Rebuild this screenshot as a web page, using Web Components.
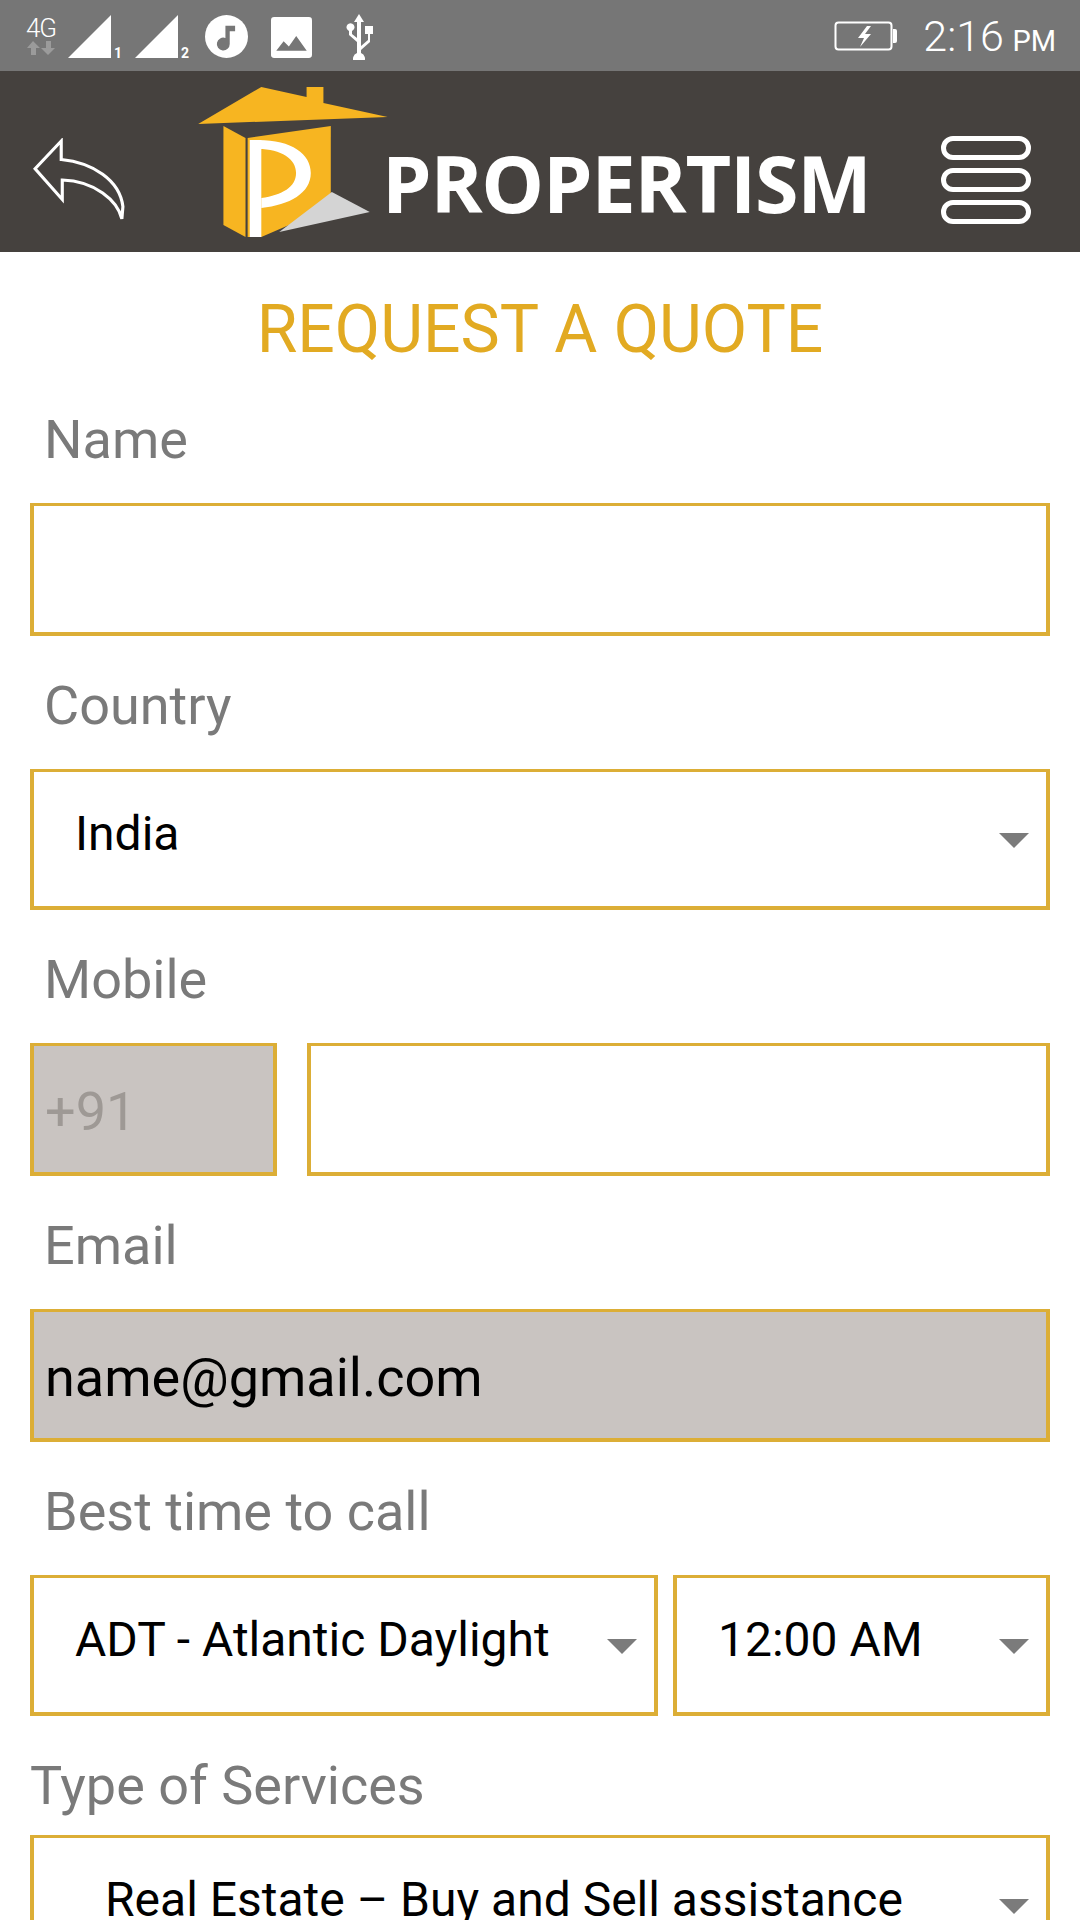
<!DOCTYPE html>
<html>
<head>
<meta charset="utf-8">
<title>Request a quote</title>
<style>
html, body { margin: 0; padding: 0; background: #fff; }
body { width: 1080px; height: 1920px; overflow: hidden; font-family: Roboto, "Liberation Sans", sans-serif; }
</style>
</head>
<body>
<status-bar></status-bar>
<app-header></app-header>
<quote-form>
    <form-field label="Name"><field-box></field-box></form-field>
    <form-field label="Country"><field-box select tall>India</field-box></form-field>
    <form-field label="Mobile">
        <field-row>
            <field-box disabled muted style="width:247px">+91</field-box>
            <field-box style="flex:1"></field-box>
        </field-row>
    </form-field>
    <form-field label="Email"><field-box disabled>name@gmail.com</field-box></form-field>
    <form-field label="Best time to call">
        <field-row narrow>
            <field-box select tall style="width:628px">ADT - Atlantic Daylight</field-box>
            <field-box select tall style="flex:1">12:00 AM</field-box>
        </field-row>
    </form-field>
    <form-field label="Type of Services" flush><field-box select tall wide>Real Estate – Buy and Sell assistance</field-box></form-field>
</quote-form>

<script>
class StatusBar extends HTMLElement {
    constructor() {
        super();
        this.attachShadow({mode: 'open'});
        this.shadowRoot.innerHTML = `
            <style>
            :host { display: flex; align-items: flex-start; height: 71px; background: #767676; color: #fff; font-family: Roboto, sans-serif; }
            .net { display: flex; flex-direction: column; align-items: center; width: 34px; margin: 15px 0 0 24px; }
            .net span { font-size: 26px; line-height: 26px; font-weight: 300; letter-spacing: -1px; }
            svg { display: block; flex: none; }
            .sim1 { margin: 15px 0 0 10px; }
            .sim2 { margin: 15px 0 0 5px; }
            .music { margin: 15px 0 0 8px; }
            .image { margin: 17px 0 0 23px; }
            .usb { margin: 14px 0 0 32px; }
            .battery { margin: 21px 0 0 auto; }
            .time { font-weight: 300; font-size: 43px; line-height: 72px; margin: 0 24px 0 24px; white-space: nowrap; }
            .time small { font-size: 29px; font-weight: 400; margin-left: -2px; }
            </style>
            <div class="net">
                <span>4G</span>
                <svg width="30" height="14" viewBox="0 0 30 14" fill="#9b9b9b">
                    <path d="M7 0l7 7h-4v7H5V7H1zM20 0h5v7h4l-7 7-7-7h5z"/>
                </svg>
            </div>
            <svg class="sim1" width="62" height="50" viewBox="0 0 62 50" fill="#fff">
                <path d="M0 43L43 0v43z"/>
                <text x="46" y="43" font-family="Roboto, sans-serif" font-size="14" font-weight="700">1</text>
            </svg>
            <svg class="sim2" width="62" height="50" viewBox="0 0 62 50" fill="#fff">
                <path d="M0 43L43 0v43z"/>
                <text x="46" y="43" font-family="Roboto, sans-serif" font-size="14" font-weight="700">2</text>
            </svg>
            <svg class="music" width="43" height="43" viewBox="0 0 40 40">
                <circle cx="20" cy="20" r="20" fill="#fff"/>
                <path d="M19 10h9v5h-5v12a6 6 0 1 1-4-5.6z" fill="#767676"/>
            </svg>
            <svg class="image" width="41" height="41" viewBox="0 0 39 39">
                <rect width="39" height="39" rx="3" fill="#fff"/>
                <path d="M5 32l7-9 5 5 7-10 10 14z" fill="#767676"/>
            </svg>
            <svg class="usb" width="30" height="46" viewBox="0 0 30 46" fill="#fff">
                <path d="M15 0l5 8h-3v24l7-6v-6h-3v-8h8v8h-3v8l-9 8v3a6 6 0 1 1-4 0v-11l-8-7v-4a4 4 0 1 1 3 0v3l5 4V8h-3z"/>
            </svg>
            <svg class="battery" width="66" height="31" viewBox="0 0 64 31">
                <rect x="1.5" y="1.5" width="56" height="27" rx="3" fill="none" stroke="#fff" stroke-width="2"/>
                <path d="M59 8h2a2 2 0 0 1 2 2v10a2 2 0 0 1-2 2h-2z" fill="#fff"/>
                <path d="M33 5l-9 12h6l-4 9 11-13h-6l6-8z" fill="#fff"/>
            </svg>
            <div class="time">2:16 <small>PM</small></div>
        `;
    }
}

class AppHeader extends HTMLElement {
    constructor() {
        super();
        this.attachShadow({mode: 'open'});
        this.shadowRoot.innerHTML = `
            <style>
            :host { display: flex; align-items: flex-start; height: 181px; background: #45413e; color: #fff; }
            svg { display: block; flex: none; }
            .back { margin: 67px 0 0 33px; }
            .logo { margin: 13px 0 0 70px; }
            .brand {
                font-family: "Open Sans", sans-serif; font-weight: 700; font-size: 79px; line-height: 80px;
                letter-spacing: -1.2px; margin: 72px 0 0 -13px; white-space: nowrap; width: 486px;
            }
            .menu { display: flex; flex-direction: column; gap: 8px; width: 90px; margin: 65px 0 0 73px; }
            .menu i { display: block; height: 24px; box-sizing: border-box; border: 5px solid #fff; border-radius: 12px; }
            </style>
            <svg class="back" width="92" height="86" viewBox="0 0 88 84" preserveAspectRatio="none">
                <path d="M2 30L27 3v18c30 3 56 20 59 46l-1 12c-4-18-26-37-57-38v19z" fill="none" stroke="#fff" stroke-width="3"/>
            </svg>
            <svg class="logo" width="200" height="160" viewBox="190 84 190 160" preserveAspectRatio="none">
                <path d="M193 124l60-37 43 10V87h16v16l61 14z" fill="#f7b521"/>
                <path d="M217 126l21 12v99l-21-12z" fill="#f7b521"/>
                <path d="M240 138l79-12v81l-66 30h-13z" fill="#f7b521"/>
                <path d="M320 192l36 20-86 20z" fill="#d4d4d4"/>
                <path d="M242 140h11v97h-11z" fill="#fff"/>
                <path d="M250 140c32 0 50 14 50 33 0 20-20 32-47 35v-10c20-3 33-11 33-25s-14-24-36-24z" fill="#fff"/>
            </svg>
            <div class="brand">PROPERTISM</div>
            <div class="menu"><i></i><i></i><i></i></div>
        `;
    }
}

class QuoteForm extends HTMLElement {
    constructor() {
        super();
        this.attachShadow({mode: 'open'});
        this.shadowRoot.innerHTML = `
            <style>
            :host { display: block; height: 1668px; overflow: hidden; background: #fff; }
            h1 {
                margin: 0; height: 118px; padding-top: 42px; box-sizing: border-box; text-align: center;
                font: 400 66px/72px Roboto, sans-serif; color: #e2aa22;
            }
            .fields { display: block; padding: 0 30px; }
            </style>
            <h1>REQUEST A QUOTE</h1>
            <div class="fields"><slot></slot></div>
        `;
    }
}

class FormField extends HTMLElement {
    constructor() {
        super();
        this.attachShadow({mode: 'open'});
        this.shadowRoot.innerHTML = `
            <style>
            :host { display: block; }
            .label {
                height: 133px; box-sizing: border-box; padding: 40px 0 0 14px;
                font: 400 54px/60px Roboto, sans-serif; color: #7a7a7a;
            }
            :host([flush]) .label { height: 119px; padding-left: 0; }
            </style>
            <div class="label"></div>
            <slot></slot>
        `;
    }
    connectedCallback() {
        this.shadowRoot.querySelector('.label').textContent = this.getAttribute('label');
    }
}

class FieldRow extends HTMLElement {
    constructor() {
        super();
        this.attachShadow({mode: 'open'});
        this.shadowRoot.innerHTML = `
            <style>
            :host { display: flex; gap: 30px; }
            :host([narrow]) { gap: 15px; }
            </style>
            <slot></slot>
        `;
    }
}

class FieldBox extends HTMLElement {
    constructor() {
        super();
        this.attachShadow({mode: 'open'});
        this.shadowRoot.innerHTML = `
            <style>
            :host {
                display: flex; align-items: center; box-sizing: border-box; height: 133px; padding: 5px 0 0 11px;
                border: solid #dcae36; border-width: 3px 4px 4px; background: #fff; color: #000;
                font: 400 54px/60px Roboto, sans-serif; white-space: nowrap; position: relative;
            }
            :host([disabled]) { background: #c9c4c1; }
            :host([muted]) { color: #9e9995; }
            :host([tall]) { height: 141px; padding: 0 0 10px 41px; font-size: 48px; }
            :host([wide]) { padding-left: 71px; }
            .arrow { display: none; position: absolute; right: 17px; top: 61px; width: 0; height: 0;
                border-left: 15px solid transparent; border-right: 15px solid transparent; border-top: 15px solid #7b7b7b; }
            :host([select]) .arrow { display: block; }
            </style>
            <slot></slot>
            <span class="arrow"></span>
        `;
    }
}

customElements.define('status-bar', StatusBar);
customElements.define('app-header', AppHeader);
customElements.define('quote-form', QuoteForm);
customElements.define('form-field', FormField);
customElements.define('field-row', FieldRow);
customElements.define('field-box', FieldBox);
</script>
</body>
</html>
